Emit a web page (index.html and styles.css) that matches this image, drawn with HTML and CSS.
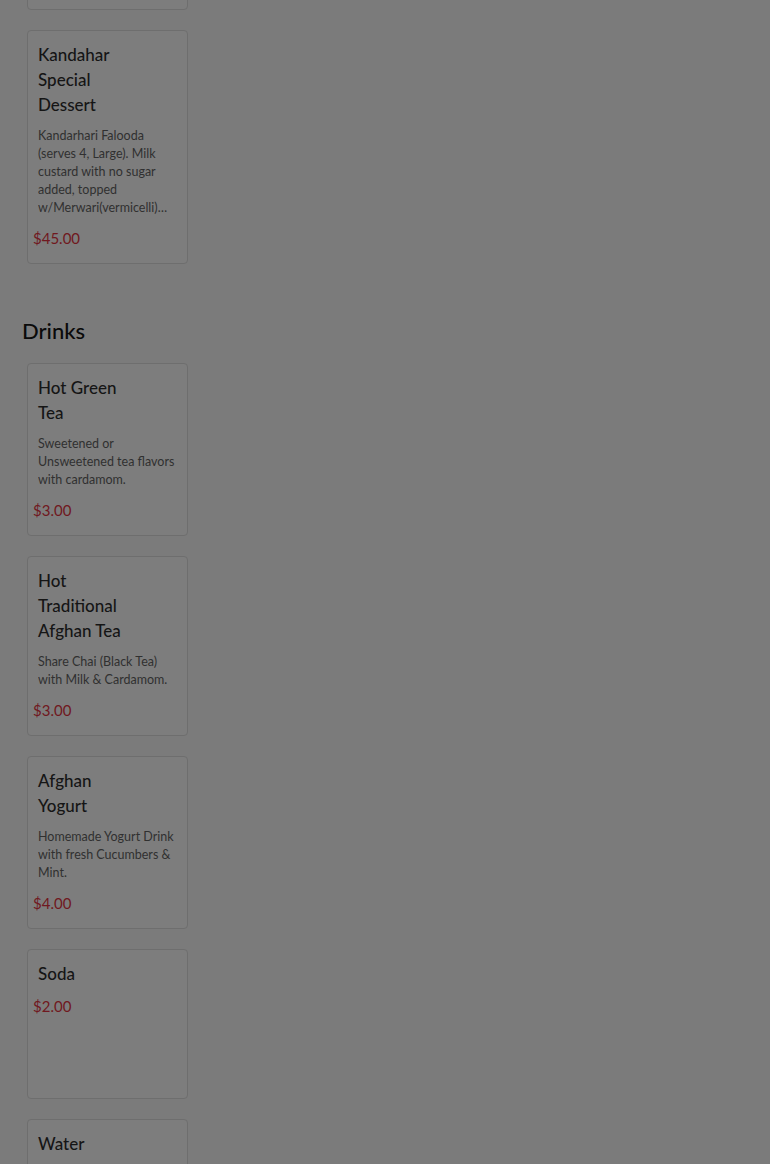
FILE: index.html
```html
<!DOCTYPE html>
<html lang="en">
<head>
    <meta charset="UTF-8">
    <meta name="viewport" content="width=device-width, initial-scale=1.0">
    <title>Menu</title>
    <link rel="stylesheet" href="styles.css">
</head>
<body>
    <div class="menu">
        <section class="category category-scrolled">
            <div class="item item-hidden"></div>
            <div class="item">
                <h3 class="item-name">Kandahar Special Dessert</h3>
                <p class="item-desc">Kandarhari Falooda (serves 4, Large). Milk custard with no sugar added, topped w/Merwari(vermicelli) pistachios, almonds and rose water.</p>
                <div class="item-price">$45.00</div>
            </div>
        </section>

        <section class="category">
            <h2 class="category-title">Drinks</h2>
            <div class="item">
                <h3 class="item-name">Hot Green Tea</h3>
                <p class="item-desc">Sweetened or Unsweetened tea flavors with cardamom.</p>
                <div class="item-price">$3.00</div>
            </div>
            <div class="item">
                <h3 class="item-name">Hot Traditional Afghan Tea</h3>
                <p class="item-desc">Share Chai (Black Tea) with Milk &amp; Cardamom.</p>
                <div class="item-price">$3.00</div>
            </div>
            <div class="item">
                <h3 class="item-name">Afghan Yogurt</h3>
                <p class="item-desc">Homemade Yogurt Drink with fresh Cucumbers &amp; Mint.</p>
                <div class="item-price">$4.00</div>
            </div>
            <div class="item">
                <h3 class="item-name">Soda</h3>
                <div class="item-price">$2.00</div>
            </div>
            <div class="item">
                <h3 class="item-name">Water</h3>
                <div class="item-price">$1.00</div>
            </div>
        </section>
    </div>
</body>
</html>
```

FILE: styles.css
```css
body {
    font-family: 'Lato', 'Liberation Sans', sans-serif;
    background-color: #7b7b7b;
    color: #141414;
    margin: 0;
    padding: 0;
}
.menu {
    padding: 0 22px;
}
.category {
    display: flex;
    flex-direction: column;
    gap: 20px;
}
.category-scrolled {
    margin-top: -140px;
    margin-bottom: 52px;
}
.category-title {
    font-size: 22px;
    font-weight: 500;
    color: #0a0a0a;
    margin: 0 0 -3px 0;
    line-height: 30px;
}
.item {
    box-sizing: border-box;
    width: 161px;
    min-height: 150px;
    margin-left: 5px;
    padding: 11px 7px 15px 5px;
    background-color: #7d7d7d;
    border: 1px solid #6e6e6e;
    border-radius: 4px;
    display: flex;
    flex-direction: column;
}
.item-name {
    font-size: 17px;
    font-weight: 500;
    line-height: 25px;
    color: #151515;
    width: 88px;
    margin: 0 0 10px 5px;
}
.item-desc {
    font-size: 12.5px;
    line-height: 18px;
    max-height: 90px;
    color: #303030;
    margin: 0 0 11px 5px;
    display: -webkit-box;
    -webkit-line-clamp: 5;
    -webkit-box-orient: vertical;
    overflow: hidden;
}
.item-price {
    font-size: 15px;
    line-height: 20px;
    color: #701820;
}
```
